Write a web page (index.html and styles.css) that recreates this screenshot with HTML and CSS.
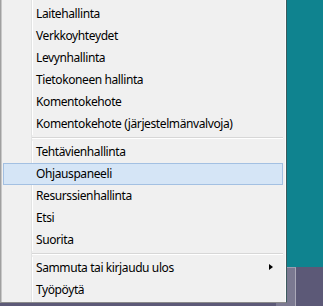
FILE: index.html
```html
<!DOCTYPE html>
<html lang="fi">
<head>
    <meta charset="UTF-8">
    <title>Win+X-valikko</title>
    <link rel="stylesheet" href="styles.css">
</head>
<body>

<div class="taskbar">
    <div class="task-button"></div>
</div>

<div class="menu">
    <div class="item">Laitehallinta</div>
    <div class="item">Verkkoyhteydet</div>
    <div class="item">Levynhallinta</div>
    <div class="item">Tietokoneen hallinta</div>
    <div class="item">Komentokehote</div>
    <div class="item">Komentokehote (järjestelmänvalvoja)</div>
    <div class="separator"></div>
    <div class="item">Tehtävienhallinta</div>
    <div class="item active">Ohjauspaneeli</div>
    <div class="item">Resurssienhallinta</div>
    <div class="item">Etsi</div>
    <div class="item">Suorita</div>
    <div class="separator"></div>
    <div class="item submenu">Sammuta tai kirjaudu ulos<span class="arrow"></span></div>
    <div class="item">Työpöytä</div>
</div>

</body>
</html>
```

FILE: styles.css
```css
body {
    margin: 0;
    width: 323px;
    height: 306px;
    overflow: hidden;
    background: #0f838f;
    font-family: 'Noto Sans', 'Segoe UI', sans-serif;
    font-size: 12px;
    letter-spacing: -0.4px;
    color: #000;
    position: relative;
}
.taskbar {
    position: absolute;
    left: 0;
    right: 0;
    bottom: 0;
    height: 39px;
    background: #5c5977;
}
.task-button {
    position: absolute;
    left: 276px;
    top: 0;
    width: 20px;
    height: 39px;
    background: #7b7991;
    border-right: 1px solid #aaa8b8;
    border-top: 1px solid #9e9cb0;
    box-sizing: border-box;
}
.menu {
    position: relative;
    width: 287px;
    height: 303px;
    box-sizing: border-box;
    padding: 3px 3px 0 2px;
    background: #f0f0f0 linear-gradient(to right, transparent 30px, #e2e3e3 30px, #e2e3e3 31px, #fff 31px, #fff 32px, transparent 32px);
    border-left: 1px solid #a0a0a0;
    border-right: 1px solid #3d5a5e;
    border-bottom: 1px solid #8a8a8a;
    box-shadow: inset -1px 0 0 #fbfbfb, inset 1px 0 0 #c8c8c8;
}
.item {
    height: 22px;
    line-height: 19px;
    padding-left: 32px;
    border: 1px solid transparent;
    box-sizing: border-box;
    white-space: nowrap;
    position: relative;
}
.item.active {
    background: #d5e5f6;
    border-color: #a3c0e2;
}
.separator {
    height: 6px;
    margin-left: 29px;
    background: linear-gradient(#f0f0f0 2px, #d7d7d7 2px, #d7d7d7 3px, #fff 3px, #fff 4px, #f0f0f0 4px);
}
.arrow {
    position: absolute;
    right: 9px;
    top: 6px;
    border-left: 4px solid #000;
    border-top: 3.5px solid transparent;
    border-bottom: 3.5px solid transparent;
}
```
